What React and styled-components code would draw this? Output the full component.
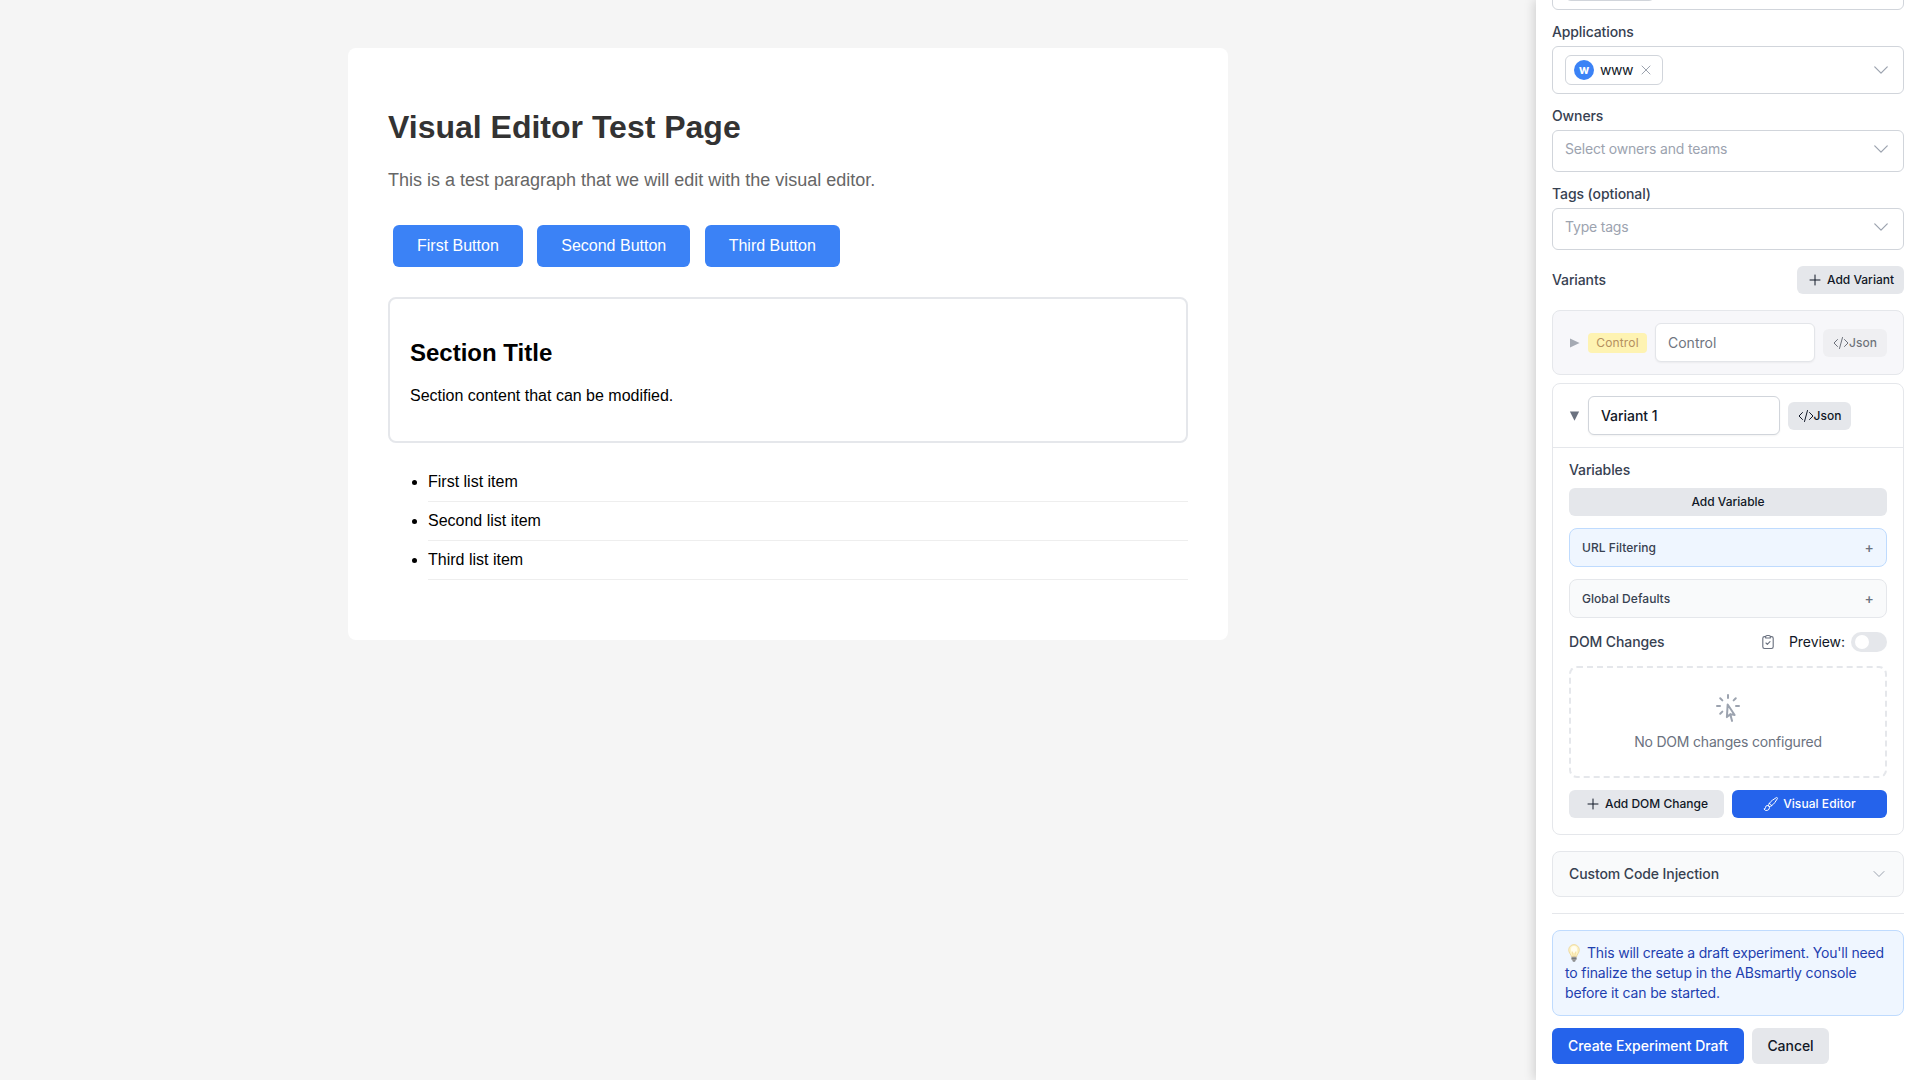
import React from "react";
import styled, { createGlobalStyle, css } from "styled-components";

const GlobalStyle = createGlobalStyle`
  *, *::before, *::after { box-sizing: border-box; }
  body { margin: 0; background: #f5f5f5; overflow: hidden; }
  button, input { font: inherit; letter-spacing: inherit; }
`;

/* ---------- Shell ---------- */

const Shell = styled.div`
  display: grid;
  grid-template-columns: 1536px 384px;
  height: 1080px;
  overflow: hidden;
`;

const Page = styled.main`
  padding: 48px 0 0 40px;
  background: #f5f5f5;
  font-family: "Liberation Sans", Arial, sans-serif;
  font-size: 16px;
  line-height: 18px;
  color: #000;
`;

const PageCard = styled.article`
  width: 880px;
  height: 592px;
  margin: 0 auto;
  padding: 61px 40px 40px;
  background: #fff;
  border-radius: 8px;
`;

const PageTitle = styled.h1`
  margin: 0;
  font-size: 32px;
  line-height: 37px;
  color: #333;
`;

const Lead = styled.p`
  margin: 24px 0 0;
  font-size: 18px;
  line-height: 20px;
  color: #666;
`;

const ButtonLine = styled.div`
  display: flex;
  gap: 14.45px;
  margin: 35px 0 0 5px;
`;

const DemoButton = styled.button`
  height: 42px;
  padding: 0 24px;
  border: 0;
  border-radius: 6px;
  background: #3b82f6;
  color: #fff;
  white-space: nowrap;
`;

const Section = styled.section`
  height: 146px;
  margin-top: 30px;
  padding: 40px 20px 0;
  border: 2px solid #e5e7eb;
  border-radius: 8px;
`;

const SectionTitle = styled.h2`
  margin: 0 0 21px;
  font-size: 24px;
  line-height: 27px;
`;

const SectionText = styled.p`
  margin: 0;
`;

const List = styled.ul`
  margin: 20px 0 0;
  padding: 0 0 0 40px;
`;

const Item = styled.li`
  padding: 10px 0;
  border-bottom: 1px solid #eee;
`;

/* ---------- Sidebar ---------- */

const Sidebar = styled.aside`
  position: relative;
  padding: 0 16px;
  background: #fff;
  box-shadow: -2px 0 10px rgba(0, 0, 0, 0.15);
  font-family: Inter, "Noto Sans", sans-serif;
  font-size: 14px;
  line-height: 20px;
  letter-spacing: -0.2px;
  color: #111827;
`;

const Field = styled.div`
  margin-bottom: 12px;
`;

const Label = styled.div`
  margin-bottom: ${(p) => p.$gap ?? 4}px;
  font-weight: 500;
  color: #374151;
  letter-spacing: ${(p) => p.$track ?? -0.12}px;
`;

const Select = styled.div`
  display: flex;
  align-items: flex-start;
  justify-content: space-between;
  min-height: 42px;
  padding: 8px 12px;
  border: 1px solid #d1d5db;
  border-radius: 6px;
  color: #9ca3af;
  ${(p) => p.$filled && css`align-items: center; height: 48px;`}
  ${(p) => p.$scrolled && css`margin-top: -38px;`}
`;

const Chip = styled.div`
  display: flex;
  align-items: center;
  width: ${(p) => p.$w}px;
  height: 30px;
  padding: 0 8px;
  border: 1px solid #d1d5db;
  border-radius: 6px;
  color: #111827;
`;

const Avatar = styled.span`
  width: 20px;
  height: 20px;
  margin-right: 6px;
  border-radius: 50%;
  background: #3b82f6;
  color: #fff;
  font-size: 12px;
  font-weight: 700;
  line-height: 19px;
  letter-spacing: 0;
  text-align: center;
  flex: none;
`;

const ChipText = styled.span`
  width: 32px;
  margin-right: 6px;
  letter-spacing: -0.5px;
  flex: none;
`;

const Svg = styled.svg`
  flex: none;
  display: block;
  width: ${(p) => p.$s}px;
  height: ${(p) => p.$s}px;
  color: ${(p) => p.$c || "currentColor"};
  fill: none;
  stroke: currentColor;
  stroke-width: ${(p) => p.$w || 1.5};
  stroke-linecap: round;
  stroke-linejoin: round;
`;

const Icon = ({ d, s = 16, c, w }) => (
  <Svg viewBox="0 0 24 24" $s={s} $c={c} $w={w}>
    <path d={d} />
  </Svg>
);

const CHEVRON = "m19.5 8.25-7.5 7.5-7.5-7.5";
const CLOSE = "M6 18 18 6M6 6l12 12";
const PLUS = "M12 4.5v15m7.5-7.5h-15";
const CODE = "M17.25 6.75 22.5 12l-5.25 5.25m-10.5 0L1.5 12l5.25-5.25m7.5-3-4.5 16.5";
const RAYS =
  "M15.042 21.672 13.684 16.6m0 0-2.51 2.225.569-9.47 5.227 7.917-3.286-.672ZM12 2.25V4.5m5.834.166-1.591 1.591M20.25 10.5H18M7.757 14.743l-1.59 1.59M6 10.5H3.75m4.007-4.243-1.59-1.59";
const BRUSH =
  "M9.53 16.122a3 3 0 0 0-5.78 1.128 2.25 2.25 0 0 1-2.4 2.245 4.5 4.5 0 0 0 8.4-2.245c0-.399-.078-.78-.22-1.128Zm0 0a15.998 15.998 0 0 0 3.388-1.62m-5.043-.025a15.994 15.994 0 0 1 1.622-3.395m3.42 3.42a15.995 15.995 0 0 0 4.764-4.648l3.876-5.814a1.151 1.151 0 0 0-1.597-1.597L14.146 6.32a15.996 15.996 0 0 0-4.649 4.763m3.42 3.42a6.776 6.776 0 0 0-3.42-3.42";
const CLIPBOARD =
  "M15.5 4h1.8a2.5 2.5 0 0 1 2.5 2.5v12.7a2.5 2.5 0 0 1-2.5 2.5H6.7a2.5 2.5 0 0 1-2.5-2.5V6.5A2.5 2.5 0 0 1 6.700 4h1.8M10.500 2.300h3a2 2 0 0 1 2 2V6h-7V4.300a2 2 0 0 1 2-2ZM9 13.500l2 2 4-4";

const Button = styled.button`
  display: flex;
  align-items: center;
  justify-content: center;
  gap: ${(p) => p.$gap ?? 4}px;
  width: ${(p) => (p.$w ? `${p.$w}px` : "auto")};
  height: ${(p) => (p.$large ? 36 : 28)}px;
  padding: 0;
  border: 0;
  border-radius: 6px;
  background: ${(p) => (p.$primary ? "#2563eb" : "#e5e7eb")};
  color: ${(p) => (p.$primary ? "#fff" : "#111827")};
  font-size: ${(p) => (p.$large ? 14 : 12)}px;
  font-weight: 500;
  letter-spacing: ${(p) => p.$track ?? 0}px;
  white-space: nowrap;
  ${(p) => p.$faded && css`opacity: 0.6; background: #eaebed;`}
`;

const Spread = styled.div`
  display: flex;
  align-items: center;
  justify-content: space-between;
  height: ${(p) => p.$h}px;
  margin: ${(p) => p.$m || 0};
`;

const VariantCard = styled.div`
  margin-bottom: ${(p) => (p.$control ? 8 : 16)}px;
  border: 1px solid #e5e7eb;
  border-radius: 8px;
  background: ${(p) => (p.$control ? "#f7f7fa" : "#fff")};
`;

const VariantHead = styled.div`
  display: flex;
  align-items: center;
  gap: 8px;
  height: 63px;
  padding: 0 16px;
`;

const Caret = styled.svg`
  flex: none;
  display: block;
  width: 11px;
  height: 10px;
  fill: ${(p) => p.$c};
`;

const Badge = styled.span`
  width: 59px;
  height: 20px;
  border-radius: 4px;
  background: #fef3b2;
  color: #b5905f;
  font-size: 12px;
  text-align: center;
  letter-spacing: 0.15px;
`;

const NameInput = styled.input`
  width: ${(p) => p.$w}px;
  height: 39px;
  padding: 0 12px;
  border: 1px solid ${(p) => (p.$muted ? "#e3e5e9" : "#d1d5db")};
  border-radius: 6px;
  background: #fff;
  box-shadow: 0 1px 2px rgba(0, 0, 0, 0.05);
  color: ${(p) => (p.$muted ? "#707580" : "#111827")};
  font-weight: ${(p) => (p.$muted ? 400 : 500)};
  letter-spacing: ${(p) => p.$track}px;
`;

const VariantBody = styled.div`
  display: flex;
  flex-direction: column;
  padding: 12px 16px 16px;
  border-top: 1px solid #e5e7eb;
`;

const Disclosure = styled.div`
  display: flex;
  align-items: center;
  justify-content: space-between;
  height: 39px;
  margin-top: 12px;
  padding: 0 12px;
  border: 1px solid ${(p) => (p.$blue ? "#bfdbfe" : "#e5e7eb")};
  border-radius: 8px;
  background: ${(p) => (p.$blue ? "#eff6ff" : "#f9fafb")};
  color: #374151;
  font-size: 12px;
  font-weight: 500;
  letter-spacing: 0.04px;
`;

const PlusSign = styled.span`
  color: #6b7280;
  font-size: 14px;
  line-height: 16px;
  padding-top: 1px;
`;

const PreviewTools = styled.div`
  display: flex;
  align-items: center;
`;

const PreviewText = styled.span`
  width: 54px;
  margin: 0 8px 0 13px;
  white-space: nowrap;
  letter-spacing: -0.08px;
`;

const Toggle = styled.span`
  display: flex;
  align-items: center;
  width: 36px;
  height: 20px;
  padding: 0 4px;
  border-radius: 10px;
  background: #e5e7eb;

  &::before {
    content: "";
    width: 14px;
    height: 14px;
    border-radius: 50%;
    background: #fff;
  }
`;

const Empty = styled.div`
  display: flex;
  flex-direction: column;
  align-items: center;
  gap: 8px;
  height: 112px;
  margin: 12px 0;
  padding-top: 24px;
  border: 2px dashed #e5e7eb;
  border-radius: 8px;
  color: #6b7280;
`;

const Row = styled.div`
  display: flex;
  gap: 8px;
`;

const CodePanel = styled.div`
  display: flex;
  align-items: center;
  justify-content: space-between;
  height: 46px;
  padding: 0 16px;
  border: 1px solid #e5e7eb;
  border-radius: 8px;
  background: #f9fafb;
  color: #374151;
  font-weight: 500;
  letter-spacing: -0.1px;
`;

const Footer = styled.div`
  margin-top: 16px;
  padding-top: 16px;
  border-top: 1px solid #e5e7eb;
`;

const Notice = styled.div`
  height: 86px;
  margin-bottom: 12px;
  padding: 12px;
  border: 1px solid #bfdbfe;
  border-radius: 8px;
  background: #eff6ff;
  color: #1e40af;
  white-space: nowrap;
`;

const Bulb = styled.svg`
  display: inline-block;
  width: 18px;
  height: 18px;
  margin-right: 4px;
  vertical-align: -4px;
`;

const Line = styled.div`
  letter-spacing: ${(p) => p.$track}px;
`;

const LightBulb = () => (
  <Bulb viewBox="0 0 18 18">
    <path d="M9 .6a5.3 5.3 0 0 0-5.3 5.3c0 3.2 2.6 4.6 2.8 7h5c.2-2.4 2.8-3.8 2.8-7A5.3 5.3 0 0 0 9 .6Z" fill="#fdf3c4" stroke="#ecd394" strokeWidth=".8" />
    <ellipse cx="9" cy="5.4" rx="3" ry="3.4" fill="#fffdf0" />
    <path d="M7.4 7.5 8.3 12.8M10.6 7.5 9.7 12.8" stroke="#e9c77c" strokeWidth=".5" fill="none" />
    <path d="M6.5 12.8h5v2.6L10.2 17H7.8l-1.3-1.6Z" fill="#9a9a9a" />
    <path d="M6.5 14.4h5M7.8 17.3h2.4" stroke="#666" strokeWidth=".7" />
  </Bulb>
);

const chevron = <Icon d={CHEVRON} s={20} c="#9ca3af" />;

export default function App() {
  return (
    <Shell>
      <GlobalStyle />
      <Page>
        <PageCard>
          <PageTitle>Visual Editor Test Page</PageTitle>
          <Lead>This is a test paragraph that we will edit with the visual editor.</Lead>
          <ButtonLine>
            <DemoButton>First Button</DemoButton>
            <DemoButton>Second Button</DemoButton>
            <DemoButton>Third Button</DemoButton>
          </ButtonLine>
          <Section>
            <SectionTitle>Section Title</SectionTitle>
            <SectionText>Section content that can be modified.</SectionText>
          </Section>
          <List>
            <Item>First list item</Item>
            <Item>Second list item</Item>
            <Item>Third list item</Item>
          </List>
        </PageCard>
      </Page>

      <Sidebar>
        <Field>
          <Select $filled $scrolled>
            <Chip $w={90} />
          </Select>
        </Field>
        <Field>
          <Label>Applications</Label>
          <Select $filled>
            <Chip $w={98}>
              <Avatar>w</Avatar>
              <ChipText>www</ChipText>
              <Icon d={CLOSE} s={16} c="#9ca3af" />
            </Chip>
            {chevron}
          </Select>
        </Field>
        <Field>
          <Label>Owners</Label>
          <Select>
            <span>Select owners and teams</span>
            {chevron}
          </Select>
        </Field>
        <Field>
          <Label $track={-0.08}>Tags (optional)</Label>
          <Select>
            <span>Type tags</span>
            {chevron}
          </Select>
        </Field>

        <Spread $h={28} $m="16px 0">
          <Label $gap={0}>Variants</Label>
          <Button $w={107}>
            <Icon d={PLUS} />
            Add Variant
          </Button>
        </Spread>

        <VariantCard $control>
          <VariantHead>
            <Caret viewBox="0 0 11 10" $c="#a5aab3"><path d="M1 .4v9.2L10.6 5Z" /></Caret>
            <Badge>Control</Badge>
            <NameInput $w={160} $muted $track={0} defaultValue="Control" />
            <Button $w={64} $gap={0} $faded>
              <Icon d={CODE} />
              Json
            </Button>
          </VariantHead>
        </VariantCard>

        <VariantCard>
          <VariantHead>
            <Caret viewBox="0 0 11 10" $c="#6b7280"><path d="M.9 .6h9.2L5.5 9.8Z" /></Caret>
            <NameInput $w={192} $track={-0.05} defaultValue="Variant 1" />
            <Button $w={63} $gap={0}>
              <Icon d={CODE} />
              Json
            </Button>
          </VariantHead>
          <VariantBody>
            <Label $gap={8}>Variables</Label>
            <Button>Add Variable</Button>
            <Disclosure $blue>
              URL Filtering<PlusSign>+</PlusSign>
            </Disclosure>
            <Disclosure>
              Global Defaults<PlusSign>+</PlusSign>
            </Disclosure>
            <Spread $h={24} $m="12px 0 0">
              <Label $gap={0}>DOM Changes</Label>
              <PreviewTools>
                <Icon d={CLIPBOARD} c="#6b7280" w={1.7} />
                <PreviewText>Preview:</PreviewText>
                <Toggle />
              </PreviewTools>
            </Spread>
            <Empty>
              <Icon d={RAYS} s={32} c="#9ca3af" />
              <span>No DOM changes configured</span>
            </Empty>
            <Row>
              <Button $w={155}>
                <Icon d={PLUS} />
                Add DOM Change
              </Button>
              <Button $w={155} $primary $track={0.06}>
                <Icon d={BRUSH} />
                Visual Editor
              </Button>
            </Row>
          </VariantBody>
        </VariantCard>

        <CodePanel>
          Custom Code Injection
          <Icon d={CHEVRON} c="#9ca3af" />
        </CodePanel>

        <Footer>
          <Notice>
            <Line $track={-0.18}><LightBulb />This will create a draft experiment. You'll need</Line>
            <Line $track={-0.14}>to finalize the setup in the ABsmartly console</Line>
            <Line $track={-0.14}>before it can be started.</Line>
          </Notice>
          <Row>
            <Button $w={192} $large $primary $track={-0.05}>Create Experiment Draft</Button>
            <Button $w={77} $large $track={-0.05}>Cancel</Button>
          </Row>
        </Footer>
      </Sidebar>
    </Shell>
  );
}
